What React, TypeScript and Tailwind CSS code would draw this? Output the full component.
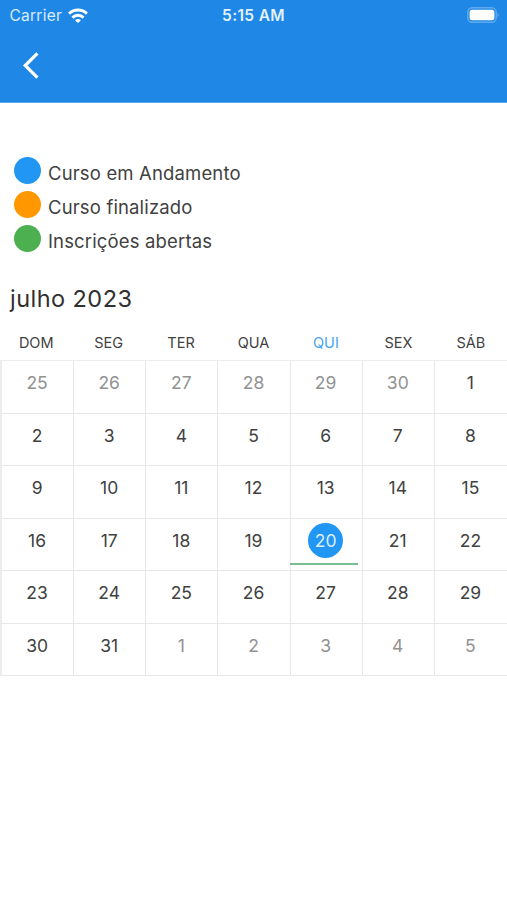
const legend = [
  { label: 'Curso em Andamento', color: 'bg-[#2196f3]' },
  { label: 'Curso finalizado', color: 'bg-[#ff9800]' },
  { label: 'Inscrições abertas', color: 'bg-[#4caf50]' },
];

const weekdays = ['DOM', 'SEG', 'TER', 'QUA', 'QUI', 'SEX', 'SÁB'];

// Six weeks starting on Sunday, 25 June 2023.
const days = Array.from({ length: 42 }, (_, i) => {
  const date = new Date(2023, 5, 25 + i);
  return { day: date.getDate(), muted: date.getMonth() !== 6 };
});

const todayIndex = 25;

function StatusBar() {
  return (
    <div className="grid h-[30px] grid-cols-3 items-center px-[9.5px] text-white">
      <div className="flex items-center gap-[6px]">
        <span className="text-[15.5px] leading-[30px] tracking-[0.25px] text-[#d8ecfd]">Carrier</span>
        <svg width="20" height="15" viewBox="0 0 21 15" preserveAspectRatio="none" fill="none" stroke="white" strokeWidth="3" className="-mt-px">
          <path d="M1.1 5.6C6.4.8 14.6.8 19.9 5.6" />
          <path d="M4.6 9.6c3.4-3.1 8.4-3.1 11.8 0" />
          <path d="M10.5 15 7.6 12.6c.6-2 5.2-2 5.8 0Z" fill="white" stroke="none" />
        </svg>
      </div>
      <span className="pt-px text-center text-[15.5px] font-semibold leading-[30px] tracking-[0.35px] text-[#e4f2fe]">5:15 AM</span>
      <div className="flex justify-end">
        <svg width="32" height="16" viewBox="0 0 32 16" className="-mr-[1px] -mt-[2px]">
          <rect x="0.8" y="0.8" width="28.4" height="14.4" rx="4.5" fill="none" stroke="#62aaee" strokeWidth="1.4" />
          <rect x="2.6" y="2.8" width="24.8" height="10.4" rx="2.6" fill="white" />
          <path d="M30.5 5.7v4.6c1.6-.8 1.6-3.8 0-4.6Z" fill="#62aaee" />
        </svg>
      </div>
    </div>
  );
}

export default function App() {
  return (
    <main className="h-[900px] w-[507px] overflow-hidden bg-white font-['Inter',sans-serif] text-[#414141]">
      <header className="h-[103px] border-b border-[#5aa8ee] bg-[#1f87e5]">
        <StatusBar />
        <button className="ml-[21px] mt-[21px] block" aria-label="Voltar">
          <svg width="20" height="29" viewBox="0 0 20 29" fill="none" stroke="white" strokeWidth="3.2">
            <path d="M16.4 2.3 4.2 14.5 16.4 26.7" />
          </svg>
        </button>
      </header>

      <ul className="mt-[54.4px] pl-[14px]">
        {legend.map((item) => (
          <li key={item.label} className="flex h-[33.7px] items-start gap-[7px]">
            <span className={`h-[27px] w-[27px] shrink-0 rounded-full ${item.color}`} />
            <span className="pt-[3px] text-[18.5px] leading-[27px] tracking-[0.15px]">{item.label}</span>
          </li>
        ))}
      </ul>

      <h1 className="mt-[24.5px] pl-[10px] text-[23.5px] leading-[32px] tracking-[0.45px] text-[#303030]">julho 2023</h1>

      <div className="mt-[16px] grid grid-cols-7 text-center text-[14.5px] leading-[23px]">
        {weekdays.map((name) => (
          <span key={name} className={name === 'QUI' ? 'text-[#45a5ed]' : ''}>{name}</span>
        ))}
      </div>

      <div className="mt-[6px] grid h-[316.3px] grid-cols-7 grid-rows-6 border-l-2 border-t border-[#ececec] text-[17.5px]">
        {days.map(({ day, muted }, i) => {
          const today = i === todayIndex;
          return (
            <div
              key={i}
              className={`flex flex-col items-center border-b border-[#e8e8e8] pr-px ${i % 7 === 6 ? '' : 'border-r'} ${muted ? 'text-[#929292]' : ''}`}
            >
              <span
                className={`mt-[4.7px] flex h-[35px] w-[35px] items-center justify-center rounded-full ${today ? 'bg-[#2196f3] text-[#dceefe]' : ''}`}
              >
                {day}
              </span>
              {today && <span className="-ml-px mt-[5px] h-[2px] w-[68px] self-start bg-[#77bd91]" />}
            </div>
          );
        })}
      </div>
    </main>
  );
}
